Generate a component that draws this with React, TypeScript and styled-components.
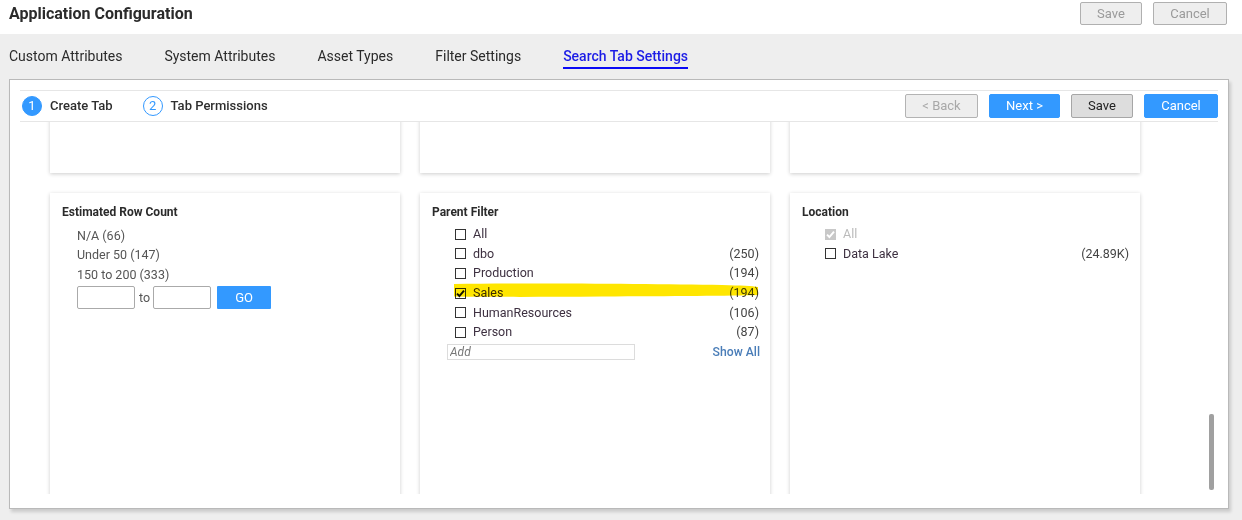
import React from "react";
import styled, { createGlobalStyle } from "styled-components";

const Global = createGlobalStyle`
  html, body { margin: 0; padding: 0; }
  body {
    width: 1242px;
    height: 520px;
    overflow: hidden;
    background: #eeeeee;
    font-family: Roboto, "Liberation Sans", Arial, sans-serif;
    color: #333;
  }
  * { box-sizing: border-box; }
`;

const Page = styled.div`
  width: 1242px;
  height: 520px;
  background: #eeeeee;
  display: flex;
  flex-direction: column;
`;

const Header = styled.div`
  height: 34px;
  background: #fff;
  display: flex;
  align-items: flex-start;
  justify-content: space-between;
  padding: 2px 15px 0 9px;
`;

const Title = styled.h1`
  margin: 0;
  font-size: 16px;
  font-weight: 700;
  color: #2b2b2b;
  line-height: 24px;
`;

const HeaderActions = styled.div`
  display: flex;
  gap: 11px;
`;

const GhostButton = styled.button<{ $w: number }>`
  width: ${(p) => p.$w}px;
  height: 23px;
  background: #eeeeee;
  border: 1px solid #b0b0b0;
  border-radius: 2px;
  color: #9a9a9a;
  font-family: Roboto, "Liberation Sans", Arial, sans-serif;
  font-size: 13px;
  padding: 0;
`;

const Tabs = styled.nav`
  height: 45px;
  display: flex;
  align-items: center;
  gap: 42px;
  padding: 0 0 1px 9px;
`;

const Tab = styled.span<{ $active?: boolean }>`
  font-size: 14px;
  font-weight: ${(p) => (p.$active ? 500 : 400)};
  color: ${(p) => (p.$active ? "#1c1ce6" : "#2b2b2b")};
  position: relative;
  line-height: 20px;
  &::after {
    content: "";
    display: ${(p) => (p.$active ? "block" : "none")};
    position: absolute;
    left: 0;
    right: 0;
    bottom: -3px;
    height: 2px;
    background: #0a0af5;
  }
`;

const Panel = styled.section`
  margin: 0 13px 0 9px;
  height: 430px;
  background: #fff;
  border: 1px solid #b9b9b9;
  box-shadow: 2px 3px 3px rgba(0, 0, 0, 0.15);
  padding: 10px 10px 14px 10px;
  display: flex;
  flex-direction: column;
`;

const StepsBar = styled.div`
  height: 32px;
  border-top: 1px solid #e6e6e6;
  border-bottom: 1px solid #e6e6e6;
  display: flex;
  align-items: center;
  padding: 0 0 1px 2px;
`;

const Step = styled.div`
  display: flex;
  align-items: center;
  gap: 8px;
  margin-right: 30px;
`;

const StepCircle = styled.span<{ $filled?: boolean }>`
  width: 20px;
  height: 20px;
  border-radius: 50%;
  display: inline-flex;
  align-items: center;
  justify-content: center;
  font-size: 13px;
  background: ${(p) => (p.$filled ? "#3399ff" : "#fff")};
  color: ${(p) => (p.$filled ? "#fff" : "#3399ff")};
  border: 1px solid #3399ff;
`;

const StepLabel = styled.span`
  font-size: 13px;
  font-weight: 500;
  color: #2e2e2e;
`;

const StepActions = styled.div`
  margin-left: auto;
  display: flex;
  gap: 11px;
`;

const ActionButton = styled.button<{ $w: number; $kind: "disabled" | "primary" | "neutral" }>`
  width: ${(p) => p.$w}px;
  height: 24px;
  border-radius: 2px;
  font-family: Roboto, "Liberation Sans", Arial, sans-serif;
  font-size: 13px;
  padding: 0;
  background: ${(p) =>
    p.$kind === "primary" ? "#3399ff" : p.$kind === "neutral" ? "#dddddd" : "#eeeeee"};
  border: 1px solid
    ${(p) => (p.$kind === "primary" ? "#3399ff" : p.$kind === "neutral" ? "#a6a6a6" : "#b3b3b3")};
  color: ${(p) => (p.$kind === "primary" ? "#fff" : p.$kind === "neutral" ? "#222" : "#a8a8a8")};
`;

const ScrollArea = styled.div`
  flex: 1;
  position: relative;
  overflow: hidden;
`;

const CardGrid = styled.div`
  display: grid;
  grid-template-columns: repeat(3, 350px);
  grid-auto-rows: auto;
  column-gap: 20px;
  row-gap: 20px;
  padding-left: 30px;
  margin-top: -100px;
`;

const Card = styled.div<{ $h: number }>`
  height: ${(p) => p.$h}px;
  background: #fff;
  box-shadow: 0 1px 4px rgba(0, 0, 0, 0.2);
  padding: 12px 11px 0 12px;
  position: relative;
`;

const CardTitle = styled.h3`
  margin: 0 0 5px 0;
  font-size: 12px;
  font-weight: 700;
  color: #2b2b2b;
  line-height: 14px;
`;

const PlainList = styled.div`
  display: flex;
  flex-direction: column;
  padding-left: 15px;
  padding-top: 1.5px;
`;

const PlainItem = styled.div`
  font-size: 12.5px;
  color: #555;
  line-height: 19.5px;
`;

const RangeRow = styled.div`
  display: flex;
  align-items: center;
  gap: 4px;
  margin-top: 2px;
`;

const RangeInput = styled.input`
  width: 58px;
  height: 23px;
  border: 1px solid #aaa;
  border-radius: 2px;
  padding: 0 4px;
`;

const RangeTo = styled.span`
  font-size: 12.5px;
  color: #555;
  margin-right: -1px;
`;

const GoButton = styled.button`
  width: 54px;
  height: 23px;
  margin-left: 2px;
  background: #3399ff;
  border: none;
  border-radius: 1px;
  color: #fff;
  font-family: Roboto, "Liberation Sans", Arial, sans-serif;
  font-size: 13px;
`;

const CheckList = styled.div`
  display: flex;
  flex-direction: column;
  padding-left: 23px;
`;

const CheckRow = styled.div`
  display: flex;
  align-items: center;
  height: 19.6px;
  font-size: 12.5px;
`;

const Box = styled.span<{ $checked?: boolean; $disabled?: boolean }>`
  width: 11px;
  height: 11px;
  border: 1px solid ${(p) => (p.$disabled ? "#c8c8c8" : "#333")};
  background: ${(p) => (p.$disabled ? "#c8c8c8" : "#fff")};
  display: inline-flex;
  align-items: center;
  justify-content: center;
  margin-right: 7px;
  flex-shrink: 0;
  margin-top: 1px;
`;

const CheckLabel = styled.span<{ $disabled?: boolean }>`
  color: ${(p) => (p.$disabled ? "#bbbbbb" : "#3d3040")};
  flex: 1;
`;

const CheckCount = styled.span`
  color: #444;
`;

const FilterFooter = styled.div`
  display: flex;
  align-items: center;
  justify-content: space-between;
  padding-left: 15px;
  margin-top: 2px;
`;

const AddInput = styled.input`
  width: 188px;
  height: 16px;
  border: 1px solid #dcdcdc;
  padding: 0 2px;
  font-family: Roboto, "Liberation Sans", Arial, sans-serif;
  font-size: 12px;
  &::placeholder {
    font-style: italic;
    color: #777;
  }
`;

const ShowAll = styled.span`
  font-size: 12.2px;
  font-weight: 500;
  color: #4a7db8;
  margin-right: -1px;
`;

const Highlight = styled.svg`
  position: absolute;
  left: 32px;
  top: 89px;
  width: 308px;
  height: 16px;
  mix-blend-mode: multiply;
  pointer-events: none;
`;

const Scrollbar = styled.div`
  position: absolute;
  right: 4px;
  top: 292px;
  width: 5px;
  height: 76px;
  border-radius: 2px;
  background: #a0a0a0;
`;

const CheckMark = ({ color }: { color: string }) => (
  <svg width="9" height="9" viewBox="0 0 9 9">
    <path d="M1 4.6 L3.4 7 L8 1.6" fill="none" stroke={color} strokeWidth="1.9" />
  </svg>
);

type Item = { label: string; count?: string; checked?: boolean; disabled?: boolean };

const parentItems: Item[] = [
  { label: "All" },
  { label: "dbo", count: "(250)" },
  { label: "Production", count: "(194)" },
  { label: "Sales", count: "(194)", checked: true },
  { label: "HumanResources", count: "(106)" },
  { label: "Person", count: "(87)" },
];

const locationItems: Item[] = [
  { label: "All", checked: true, disabled: true },
  { label: "Data Lake", count: "(24.89K)" },
];

const Checks = ({ items }: { items: Item[] }) => (
  <CheckList>
    {items.map((it) => (
      <CheckRow key={it.label}>
        <Box $checked={it.checked} $disabled={it.disabled}>
          {it.checked && <CheckMark color={it.disabled ? "#fff" : "#111"} />}
        </Box>
        <CheckLabel $disabled={it.disabled}>{it.label}</CheckLabel>
        {it.count && <CheckCount>{it.count}</CheckCount>}
      </CheckRow>
    ))}
  </CheckList>
);

export default function App() {
  return (
    <Page>
      <Global />
      <Header>
        <Title>Application Configuration</Title>
        <HeaderActions>
          <GhostButton $w={62}>Save</GhostButton>
          <GhostButton $w={74}>Cancel</GhostButton>
        </HeaderActions>
      </Header>
      <Tabs>
        <Tab>Custom Attributes</Tab>
        <Tab>System Attributes</Tab>
        <Tab>Asset Types</Tab>
        <Tab>Filter Settings</Tab>
        <Tab $active>Search Tab Settings</Tab>
      </Tabs>
      <Panel>
        <StepsBar>
          <Step>
            <StepCircle $filled>1</StepCircle>
            <StepLabel>Create Tab</StepLabel>
          </Step>
          <Step>
            <StepCircle>2</StepCircle>
            <StepLabel>Tab Permissions</StepLabel>
          </Step>
          <StepActions>
            <ActionButton $w={73} $kind="disabled">&lt; Back</ActionButton>
            <ActionButton $w={71} $kind="primary">Next &gt;</ActionButton>
            <ActionButton $w={62} $kind="neutral">Save</ActionButton>
            <ActionButton $w={74} $kind="primary">Cancel</ActionButton>
          </StepActions>
        </StepsBar>
        <ScrollArea>
          <CardGrid>
            <Card $h={151} />
            <Card $h={151} />
            <Card $h={151} />
            <Card $h={400}>
              <CardTitle>Estimated Row Count</CardTitle>
              <PlainList>
                <PlainItem>N/A (66)</PlainItem>
                <PlainItem>Under 50 (147)</PlainItem>
                <PlainItem>150 to 200 (333)</PlainItem>
                <RangeRow>
                  <RangeInput />
                  <RangeTo>to</RangeTo>
                  <RangeInput />
                  <GoButton>GO</GoButton>
                </RangeRow>
              </PlainList>
            </Card>
            <Card $h={400}>
              <CardTitle>Parent Filter</CardTitle>
              <Checks items={parentItems} />
              <FilterFooter>
                <AddInput placeholder="Add" />
                <ShowAll>Show All</ShowAll>
              </FilterFooter>
              <Highlight viewBox="0 0 308 16" preserveAspectRatio="none">
                <path
                  d="M2 2 C 80 1, 200 2, 270 3 C 290 3.5, 300 4, 306 5 L 306 13 C 280 14, 220 14, 150 14.5 C 90 15, 40 15, 2 14.5 Z"
                  fill="#ffe600"
                />
              </Highlight>
            </Card>
            <Card $h={400}>
              <CardTitle>Location</CardTitle>
              <Checks items={locationItems} />
            </Card>
          </CardGrid>
          <Scrollbar />
        </ScrollArea>
      </Panel>
    </Page>
  );
}
